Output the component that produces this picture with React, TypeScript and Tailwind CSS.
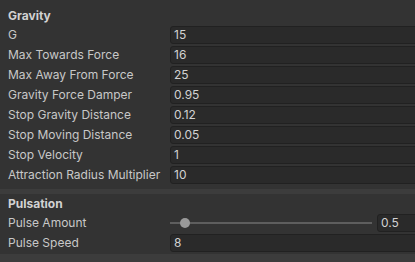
import React from 'react';

const gravity: [string, string][] = [
  ['G', '15'],
  ['Max Towards Force', '16'],
  ['Max Away From Force', '25'],
  ['Gravity Force Damper', '0.95'],
  ['Stop Gravity Distance', '0.12'],
  ['Stop Moving Distance', '0.05'],
  ['Stop Velocity', '1'],
  ['Attraction Radius Multiplier', '10'],
];

function Field({ value }: { value: string }) {
  return (
    <div className="flex-1 h-[18px] flex items-center pl-[3px] rounded-[3px] border border-[#212121] bg-[#2a2a2a] text-[#d2d2d2]">
      {value}
    </div>
  );
}

function Row({ label, children }: { label: string; children: React.ReactNode }) {
  return (
    <div className="flex items-center h-[20px]">
      <div className="w-[170px] shrink-0 pl-[8px] truncate">{label}</div>
      {children}
    </div>
  );
}

export default function App() {
  return (
    <div
      className="w-[415px] h-[262px] overflow-hidden bg-[#3c3c3c] text-[12px] text-[#c8c8c8]"
      style={{ fontFamily: 'Inter, "Noto Sans", sans-serif' }}
    >
      <div className="bg-[#333333] pt-[6px] pb-[4px] mr-[-4px]">
        <div className="h-[19px] pl-[8px] font-bold text-[#d2d2d2] flex items-center">Gravity</div>
        {gravity.map(([label, value]) => (
          <Row key={label} label={label}>
            <Field value={value} />
          </Row>
        ))}
      </div>
      <div className="h-[5px]" />
      <div className="bg-[#333333] pb-[1px] mr-[-4px]">
        <div className="h-[19px] pl-[8px] font-bold text-[#d2d2d2] flex items-center">Pulsation</div>
        <Row label="Pulse Amount">
          <div className="flex-1 flex items-center">
            <div className="relative w-[202px] h-[2px] bg-[#5e5e5e]">
              <div className="absolute left-[10px] top-[-4px] w-[10px] h-[10px] rounded-full bg-[#999999]" />
            </div>
            <div className="ml-[5px] flex-1 flex">
              <Field value="0.5" />
            </div>
          </div>
        </Row>
        <Row label="Pulse Speed">
          <Field value="8" />
        </Row>
      </div>
    </div>
  );
}
